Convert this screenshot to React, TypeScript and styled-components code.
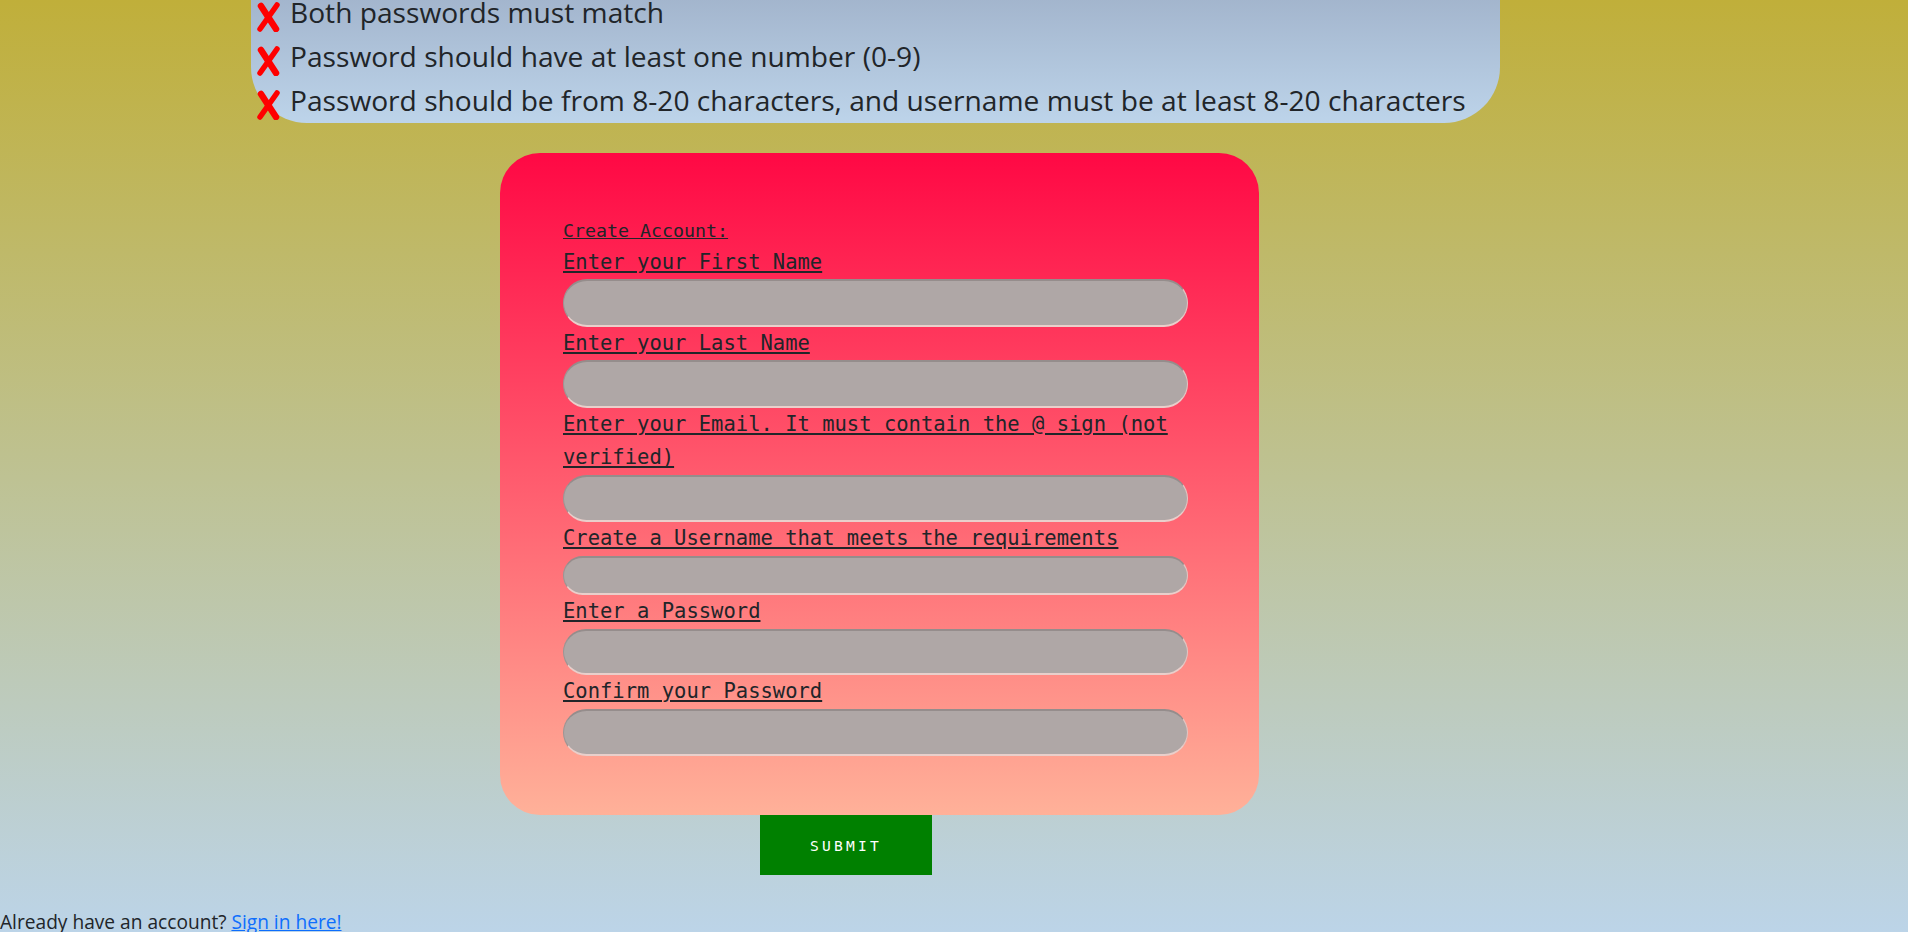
import React from "react";
import styled, { createGlobalStyle } from "styled-components";

const GlobalStyle = createGlobalStyle`
  html, body {
    margin: 0;
    padding: 0;
  }
  body {
    font-family: "Open Sans", "Noto Sans", sans-serif;
    color: #212529;
    overflow: hidden;
  }
  * {
    box-sizing: border-box;
  }
`;

const Page = styled.div`
  height: 932px;
  overflow: hidden;
  background: linear-gradient(180deg, #c0af3a 0%, #bcd4e8 100%);
  display: flex;
  flex-direction: column;
  align-items: flex-start;

  & > * {
    flex: none;
  }
`;

const Requirements = styled.ul`
  list-style: none;
  margin: -10px 0 0 251px;
  padding: 0 0 1px 5px;
  width: 1249px;
  background: linear-gradient(180deg, #a1b3cb 0%, #bdd4ea 100%);
  border-radius: 0 0 56px 56px;
  font-family: "Open Sans", "Noto Sans", sans-serif;
  font-size: 28.15px;
  line-height: 44px;
  color: #212529;
`;

const Requirement = styled.li`
  display: flex;
  align-items: center;
  white-space: nowrap;
`;

const Cross = styled.svg`
  flex: none;
  width: 24px;
  height: 30px;
  margin: 9px 10px 0 0;
`;

const Card = styled.form`
  margin: 30px 0 0 500px;
  width: 759px;
  padding: 62.5px 71px 59px 63px;
  border-radius: 40px;
  background: linear-gradient(180deg, #ff0844 0%, #ffb199 100%);
  font-family: "DejaVu Sans Mono", "Liberation Mono", monospace;
  color: #212529;
  display: flex;
  flex-direction: column;
  align-items: flex-start;
`;

const Title = styled.div`
  font-size: 18.3px;
  line-height: 30px;
  text-decoration: underline;
`;

const FieldLabel = styled.label`
  display: block;
  width: 625px;
  font-size: 20.5px;
  line-height: 33.6px;
  text-decoration: underline;
`;

const Field = styled.input<{ $h: number }>`
  display: block;
  flex: none;
  width: 625px;
  height: ${(p) => p.$h}px;
  margin: 0;
  padding: 0 20px;
  border-radius: 999px;
  background: #afa7a6;
  border-style: solid;
  border-width: 2px 1px 2px 1px;
  border-top-color: #958d8c;
  border-left-color: #9d9594;
  border-bottom-color: #e9cfcb;
  border-right-color: #e2c6c2;
  font: inherit;
  outline: none;
`;

const SubmitButton = styled.button`
  margin: 0 0 0 760px;
  width: 172px;
  height: 60px;
  border: none;
  border-radius: 0;
  background: #008000;
  color: #ffffff;
  font-family: "DejaVu Sans Mono", "Liberation Mono", monospace;
  font-size: 14.6px;
  letter-spacing: 3.2px;
  padding: 0;
`;

const Footer = styled.p`
  margin: 32px 0 0 0;
  font-family: "Open Sans", "Noto Sans", sans-serif;
  font-size: 19.15px;
  line-height: 30px;
  color: #212529;
  white-space: nowrap;
`;

const SignInLink = styled.a`
  color: #0d6efd;
  text-decoration: underline;
`;

const requirements = [
  "Both passwords must match",
  "Password should have at least one number (0-9)",
  "Password should be from 8-20 characters, and username must be at least 8-20 characters",
];

const fields: { label: string; h: number; type: string }[] = [
  { label: "Enter your First Name", h: 47.5, type: "text" },
  { label: "Enter your Last Name", h: 47.5, type: "text" },
  { label: "Enter your Email. It must contain the @ sign (not verified)", h: 47.5, type: "email" },
  { label: "Create a Username that meets the requirements", h: 39, type: "text" },
  { label: "Enter a Password", h: 46.5, type: "password" },
  { label: "Confirm your Password", h: 47.5, type: "password" },
];

function CrossIcon() {
  return (
    <Cross viewBox="0 0 24 30" aria-hidden="true">
      <path d="M5 4 L20 27" stroke="#ff0000" strokeWidth="6.5" strokeLinecap="round" fill="none" />
      <path d="M21 3 L4 27" stroke="#ff0000" strokeWidth="5.5" strokeLinecap="round" fill="none" />
    </Cross>
  );
}

export default function App() {
  return (
    <>
      <GlobalStyle />
      <Page>
        <Requirements>
          {requirements.map((r) => (
            <Requirement key={r}>
              <CrossIcon />
              {r}
            </Requirement>
          ))}
        </Requirements>
        <Card onSubmit={(e) => e.preventDefault()}>
          <Title>Create Account:</Title>
          {fields.map((f, i) => (
            <React.Fragment key={f.label}>
              <FieldLabel htmlFor={`field-${i}`}>{f.label}</FieldLabel>
              <Field id={`field-${i}`} type={f.type} $h={f.h} />
            </React.Fragment>
          ))}
        </Card>
        <SubmitButton type="button">SUBMIT</SubmitButton>
        <Footer>
          Already have an account? <SignInLink href="#">Sign in here!</SignInLink>
        </Footer>
      </Page>
    </>
  );
}
